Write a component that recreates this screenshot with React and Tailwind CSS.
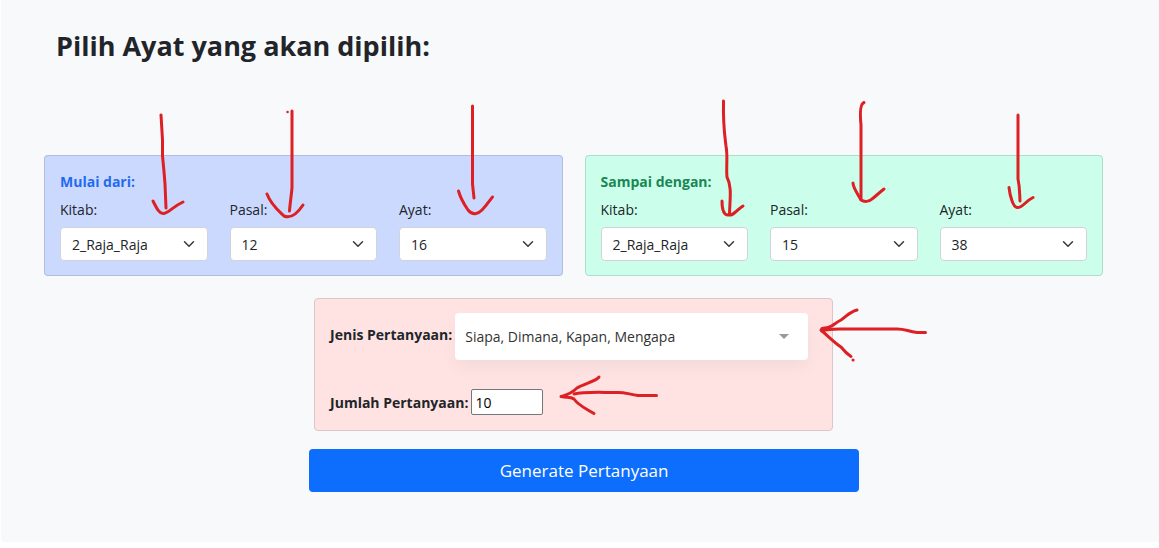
import { useState } from "react";

function Chevron() {
  return (
    <svg viewBox="0 0 16 16" className="pointer-events-none col-start-1 row-start-1 mr-[13px] h-3 w-3 self-center justify-self-end" fill="none" stroke="#343a40" strokeWidth="2" strokeLinecap="round" strokeLinejoin="round" aria-hidden="true">
      <path d="m2 5 6 6 6-6" />
    </svg>
  );
}

function Field({ id, label, value }) {
  return (
    <div className="min-w-0">
      <label htmlFor={id} className="mb-[7px] block leading-5">{label}</label>
      <div className="grid">
        <select id={id} defaultValue={value} className="col-start-1 row-start-1 h-[34px] w-full appearance-none rounded border border-[#ced4da] bg-white pr-8 pl-[11px] text-[#212529]">
          <option>{value}</option>
        </select>
        <Chevron />
      </div>
    </div>
  );
}

function VersePanel({ prefix, title, book, chapter, verse, tone, titleTone }) {
  return (
    <fieldset className={`min-w-0 rounded border px-[15px] pt-[15px] pb-[14px] ${tone}`}>
      <h2 className={`mb-2 font-bold ${titleTone}`}>{title}</h2>
      <div className="grid grid-cols-3 gap-[22px]">
        <Field id={`${prefix}-kitab`} label="Kitab:" value={book} />
        <Field id={`${prefix}-pasal`} label="Pasal:" value={chapter} />
        <Field id={`${prefix}-ayat`} label="Ayat:" value={verse} />
      </div>
    </fieldset>
  );
}

function Arrows() {
  return (
    <svg width="1159" height="542" viewBox="1 0 1159 542" className="pointer-events-none absolute top-0 left-0" fill="none" stroke="#dc2024" strokeWidth="3" strokeLinecap="round" strokeLinejoin="round" aria-hidden="true">
      <path d="M161 115 L162.500 140 L162.500 156 Q164 170 165 184 L166 208" />
      <path d="M153 201 C157 209 159 213 163 213.500 C168 214 172 207 183 202" />
      <path d="M292 111 V188 C291 198 290 204 289.500 211" />
      <path d="M287.500 112 h.1" strokeWidth="2.400" />
      <path d="M267 194 C271 205 280 212 284 216 C291 219 297 214 303 205" />
      <path d="M472.500 106 V184 L474 198" />
      <path d="M458.500 191 C461 200 466 207 468 210 C473 216 478 214 482 210 C487 205 490 200 492.500 197" />
      <path d="M723.500 101 C723 125 724 130 726 146 C728 156 726 168 727 177 C732 187 730 197 729.500 214" />
      <path d="M722 201 C722 211 724 215 728 215 C734 216 735 211 743 206" />
      <path d="M864 102.500 C860 104 860 115 861 125 V199" />
      <path d="M853 183 C853 188 858 194 861 200 C864 202 869 202 872 199 C876 196 880 192 884 189" />
      <path d="M1018 115 V179 C1020 188 1019.500 193 1020 201" />
      <path d="M1009 187.500 C1010 196 1013 207 1017 207.500 C1023 208 1024 202 1033 197.500" />
      <path d="M925.500 332.500 H917 C907 331 905 329 897 329 H850 C838 329 829 328 822 331" />
      <path d="M857 310 C849 312 846 317 841 320 C835 323 832 327 828 327.500 L822 328.500 L821 330 C829 337 835 343 841 347 C845 352 847 354 851 356.500" />
      <path d="M853 360 h.1" />
      <path d="M656.500 395.500 H638 C628 394 624 392 616 392.500 C600 392.500 584 391.500 574 394" />
      <path d="M599 377 C597 381 583 384 577 388 C571 394 566 395 561 396.500 C567 398 570 396 574 399 C579 406 585 408 594 413.500" />
    </svg>
  );
}

export default function App() {
  const [count, setCount] = useState(10);
  return (
    <div className="min-h-screen bg-white pb-1.5 pl-px font-['Open_Sans','Noto_Sans',sans-serif] text-sm leading-[21px] text-[#212529]">
      <main className="relative rounded-bl bg-[#f8f9fb] pt-[27px] pr-14 pb-[50px] pl-[43px]">
        <h1 className="pl-3 text-[27px] leading-[38px] font-bold">Pilih Ayat yang akan dipilih:</h1>
        <form onSubmit={(e) => e.preventDefault()} className="mt-[90px]">
          <div className="grid grid-cols-2 gap-[22px]">
            <VersePanel prefix="mulai" title="Mulai dari:" book="2_Raja_Raja" chapter="12" verse="16" tone="border-[#b1bcde] bg-[#ccd9ff]" titleTone="text-[#1f6bf0]" />
            <VersePanel prefix="sampai" title="Sampai dengan:" book="2_Raja_Raja" chapter="15" verse="38" tone="border-[#b1dccc] bg-[#ccffeb]" titleTone="text-[#198754]" />
          </div>
          <div className="mx-auto mt-[22px] w-[49%] rounded border border-[#dfc5c8] bg-[#ffe3e3] px-[15px] pt-[14px] pb-[15px]">
            <div className="flex items-center">
              <label htmlFor="jenis" className="mr-[3px] shrink-0 pb-1 font-bold">Jenis Pertanyaan:</label>
              <div className="mr-[9px] grid min-w-0 grow">
                <select id="jenis" className="col-start-1 row-start-1 h-[47px] w-full appearance-none rounded bg-white pr-10 pl-2.5 text-[#333] shadow-[0_8px_16px_rgba(0,0,0,0.04)]">
                  <option>Siapa, Dimana, Kapan, Mengapa</option>
                </select>
                <svg viewBox="0 0 10 5" className="pointer-events-none col-start-1 row-start-1 mr-[19px] h-[5px] w-2.5 self-center justify-self-end" fill="#999" aria-hidden="true">
                  <path d="M0 0h10L5 5z" />
                </svg>
              </div>
            </div>
            <div className="mt-[29px] flex items-center">
              <label htmlFor="jumlah" className="mr-[3px] font-bold">Jumlah Pertanyaan:</label>
              <input id="jumlah" type="number" value={count} onChange={(e) => setCount(e.target.value)} className="h-[26px] w-[72px] appearance-none rounded-xs border border-[#767676] bg-white px-[3px] text-black" />
            </div>
          </div>
          <button type="submit" className="mt-[18px] ml-[25%] block h-[43px] w-[52%] rounded bg-[#0d6efd] text-[17px] text-white">Generate Pertanyaan</button>
        </form>
        <Arrows />
      </main>
    </div>
  );
}
